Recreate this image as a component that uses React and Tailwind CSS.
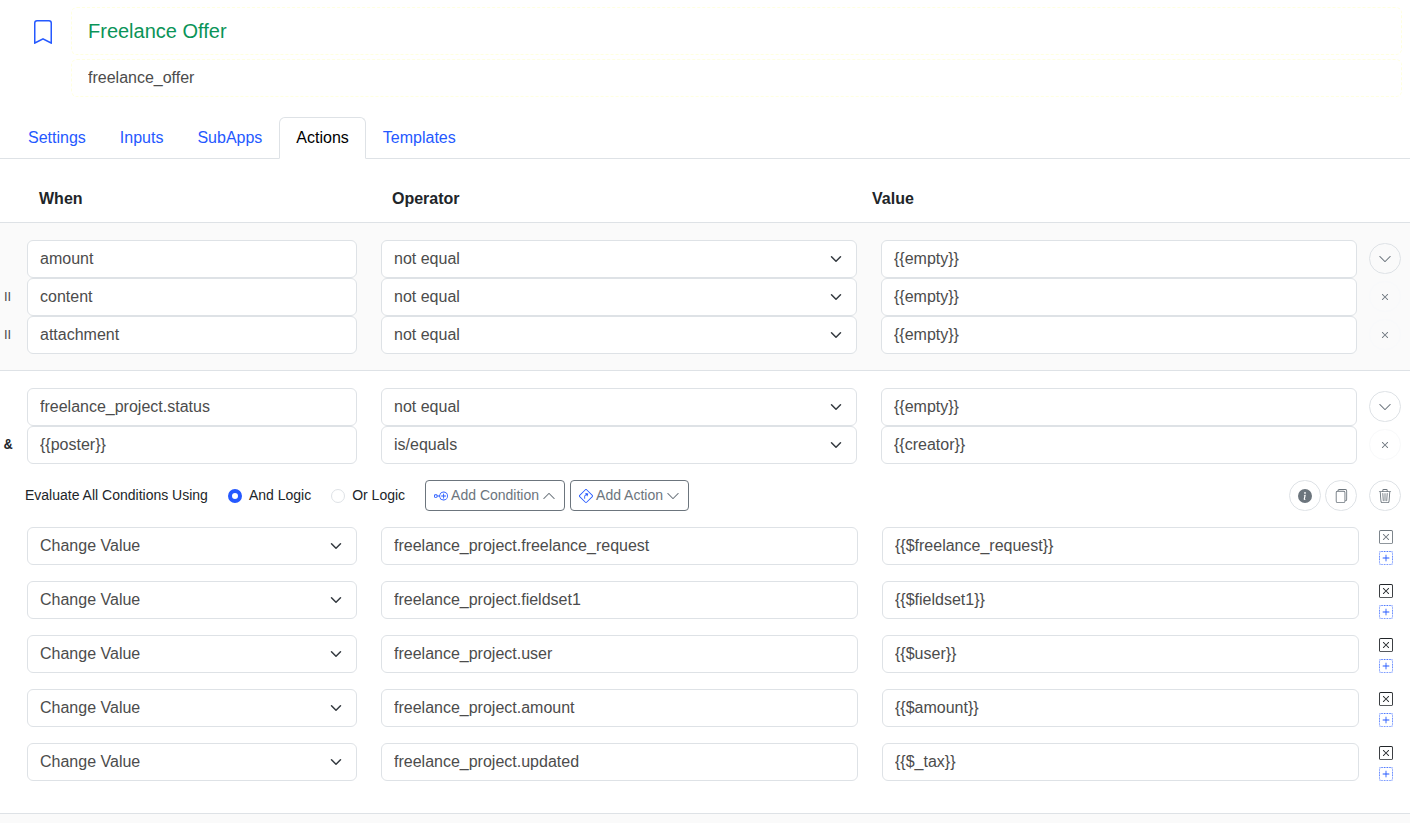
import { useState } from 'react';
import {
  BsBookmark,
  BsChevronDown,
  BsChevronUp,
  BsFiles,
  BsInfoCircleFill,
  BsNodePlus,
  BsPlusSquareDotted,
  BsSignTurnSlightRight,
  BsTrash3,
  BsX,
  BsXSquare,
} from 'react-icons/bs';

const TABS = ['Settings', 'Inputs', 'SubApps', 'Actions', 'Templates'];

const OPERATORS = ['not equal', 'is/equals', 'contains', 'greater than', 'less than'];

const ACTION_TYPES = ['Change Value', 'Send Email', 'Create Item'];

const CONTENT_CONDITIONS = [
  { field: 'amount', operator: 'not equal', value: '{{empty}}' },
  { join: 'II', field: 'content', operator: 'not equal', value: '{{empty}}' },
  { join: 'II', field: 'attachment', operator: 'not equal', value: '{{empty}}' },
];

const STATUS_CONDITIONS = [
  { field: 'freelance_project.status', operator: 'not equal', value: '{{empty}}' },
  { join: '&', field: '{{poster}}', operator: 'is/equals', value: '{{creator}}' },
];

const ACTIONS = [
  { field: 'freelance_project.freelance_request', value: '{{$freelance_request}}' },
  { field: 'freelance_project.fieldset1', value: '{{$fieldset1}}' },
  { field: 'freelance_project.user', value: '{{$user}}' },
  { field: 'freelance_project.amount', value: '{{$amount}}' },
  { field: 'freelance_project.updated', value: '{{$_tax}}' },
];

const TextField = ({ label, value }) => (
  <input
    type="text"
    aria-label={label}
    defaultValue={value}
    className="h-[38px] w-full min-w-0 rounded-md border border-[#dee2e6] bg-white px-3 text-base text-[#4c4c4c] outline-none focus:border-[#2559ff]"
  />
);

const SelectField = ({ label, value, options }) => (
  <div className="relative min-w-0">
    <select
      aria-label={label}
      defaultValue={value}
      className="block h-[38px] w-full appearance-none rounded-md border border-[#dee2e6] bg-white pr-9 pl-3 text-base text-[#4c4c4c] outline-none focus:border-[#2559ff]"
    >
      {options.map((option) => (
        <option key={option}>{option}</option>
      ))}
    </select>
    <svg
      viewBox="0 0 16 16"
      className="pointer-events-none absolute top-[11px] right-[13px] h-4 w-4 px-[2px]"
      fill="none"
      stroke="#343a40"
      strokeWidth="2"
      strokeLinecap="round"
      strokeLinejoin="round"
    >
      <path d="m2 5 6 6 6-6" />
    </svg>
  </div>
);

const RoundButton = ({ label, children, faint }) => (
  <button
    type="button"
    aria-label={label}
    className={`flex h-[31px] w-8 items-center justify-center rounded-full border text-[#6c757d] ${
      faint ? 'border-[#f8f9fa]' : 'border-[#dee2e6]'
    }`}
  >
    {children}
  </button>
);

const ConditionRow = ({ condition }) => (
  <div className="flex items-center">
    <span
      className={`w-[27px] shrink-0 pl-1 ${
        condition.join === '&'
          ? "font-['Liberation_Mono',monospace] text-sm font-bold text-[#212529]"
          : 'text-[13px] text-[#4c4c4c]'
      }`}
    >
      {condition.join}
    </span>
    <div className="grid flex-1 grid-cols-[330fr_476fr_476fr] gap-x-6">
      <TextField label="When" value={condition.field} />
      <SelectField label="Operator" value={condition.operator} options={OPERATORS} />
      <TextField label="Value" value={condition.value} />
    </div>
    <div className="w-[53px] shrink-0 pb-px pl-3">
      {condition.join ? (
        <RoundButton label="Remove condition" faint>
          <BsX className="h-[14px] w-[14px]" />
        </RoundButton>
      ) : (
        <RoundButton label="Toggle details">
          <BsChevronDown className="h-[14px] w-[14px]" />
        </RoundButton>
      )}
    </div>
  </div>
);

const ActionRow = ({ action, muted }) => (
  <div className="flex pl-[27px]">
    <div className="grid flex-1 grid-cols-[330fr_477fr_477fr] gap-x-6">
      <SelectField label="Action type" value="Change Value" options={ACTION_TYPES} />
      <TextField label="Target field" value={action.field} />
      <TextField label="New value" value={action.value} />
    </div>
    <div className="flex w-[51px] shrink-0 flex-col items-start gap-[7px] pt-[3px] pl-5">
      <button type="button" aria-label="Remove action" className={muted ? 'text-[#6c757d]' : 'text-[#212529]'}>
        <BsXSquare className="h-[14px] w-[14px]" />
      </button>
      <button type="button" aria-label="Add action below" className="text-[#2559ff]">
        <BsPlusSquareDotted className="h-[14px] w-[14px]" />
      </button>
    </div>
  </div>
);

const LogicOption = ({ label, checked, onChange }) => (
  <label className="ml-5 flex items-center gap-[7px]">
    <input
      type="radio"
      name="logic"
      checked={checked}
      onChange={onChange}
      className="h-[14px] w-[14px] appearance-none rounded-full border border-[#dee2e6] bg-white checked:border-4 checked:border-[#2559ff]"
    />
    <span className="pb-0.5">{label}</span>
  </label>
);

const OutlineButton = ({ children, className = '' }) => (
  <button
    type="button"
    className={`flex h-[31px] items-center gap-[3px] rounded border border-[#6c757d] px-2 text-[#6c757d] ${className}`}
  >
    {children}
  </button>
);

const App = () => {
  const [tab, setTab] = useState('Actions');
  const [logic, setLogic] = useState('and');

  return (
    <main className="flex min-h-screen flex-col bg-white font-['Liberation_Sans',Arial,sans-serif] text-base text-[#212529]">
      <header className="flex pt-[7px] pr-2">
        <button
          type="button"
          aria-label="Bookmark"
          className="flex h-[50px] w-[71px] items-center justify-end pr-4 text-[#2559ff]"
        >
          <BsBookmark className="h-6 w-6" />
        </button>
        <div className="grid flex-1 gap-1">
          <input
            type="text"
            aria-label="Name"
            defaultValue="Freelance Offer"
            className="h-12 w-full rounded-md border border-dashed border-[#ffffe0] px-4 text-xl text-[#0a9458] outline-none"
          />
          <input
            type="text"
            aria-label="Identifier"
            defaultValue="freelance_offer"
            className="h-[38px] w-full rounded-md border border-dashed border-[#ffffe0] px-4 text-base text-[#4c4c4c] outline-none"
          />
        </div>
      </header>

      <nav className="mt-5 flex border-b border-[#dee2e6] pl-[11px]">
        {TABS.map((name) => (
          <a
            key={name}
            href={`#${name.toLowerCase()}`}
            onClick={() => setTab(name)}
            className={`-mb-px rounded-t-md border px-4 py-2 leading-6 ${
              tab === name
                ? 'border-[#dee2e6] border-b-white bg-white text-black'
                : 'border-transparent text-[#2559ff]'
            }`}
          >
            {name}
          </a>
        ))}
      </nav>

      <div className="grid grid-cols-[353fr_480fr_538fr] border-b border-[#dee2e6] pt-7 pb-[11px] pl-[39px] leading-6 font-bold">
        <span>When</span>
        <span>Operator</span>
        <span>Value</span>
      </div>

      <section className="border-b border-[#dee2e6] bg-[#fafafa] pt-[17px] pb-4">
        {CONTENT_CONDITIONS.map((condition) => (
          <ConditionRow key={condition.field} condition={condition} />
        ))}
      </section>

      <section className="border-b border-[#dee2e6] pt-[17px] pb-8">
        {STATUS_CONDITIONS.map((condition) => (
          <ConditionRow key={condition.field} condition={condition} />
        ))}

        <div className="flex items-center py-4 pr-[9px] pl-[25px] text-sm">
          <span className="pb-0.5">Evaluate All Conditions Using</span>
          <LogicOption label="And Logic" checked={logic === 'and'} onChange={() => setLogic('and')} />
          <LogicOption label="Or Logic" checked={logic === 'or'} onChange={() => setLogic('or')} />
          <OutlineButton className="ml-5">
            <BsNodePlus className="h-[14px] w-[14px] text-[#2559ff]" />
            <span className="pb-0.5">Add Condition</span>
            <BsChevronUp className="h-[14px] w-[14px]" />
          </OutlineButton>
          <OutlineButton className="ml-[5px]">
            <BsSignTurnSlightRight className="h-[14px] w-[14px] text-[#2559ff]" />
            <span className="pb-0.5">Add Action</span>
            <BsChevronDown className="h-[14px] w-[14px]" />
          </OutlineButton>
          <div className="ml-auto flex gap-1">
            <RoundButton label="Info">
              <BsInfoCircleFill className="h-[14px] w-[14px]" />
            </RoundButton>
            <RoundButton label="Duplicate">
              <BsFiles className="h-[14px] w-[14px]" />
            </RoundButton>
          </div>
          <div className="ml-3">
            <RoundButton label="Delete">
              <BsTrash3 className="h-[14px] w-[14px]" />
            </RoundButton>
          </div>
        </div>

        <div className="grid gap-4">
          {ACTIONS.map((action, index) => (
            <ActionRow key={action.field} action={action} muted={index === 0} />
          ))}
        </div>
      </section>

      <div className="flex-1 bg-[#fafafa]" />
    </main>
  );
};

export default App;
